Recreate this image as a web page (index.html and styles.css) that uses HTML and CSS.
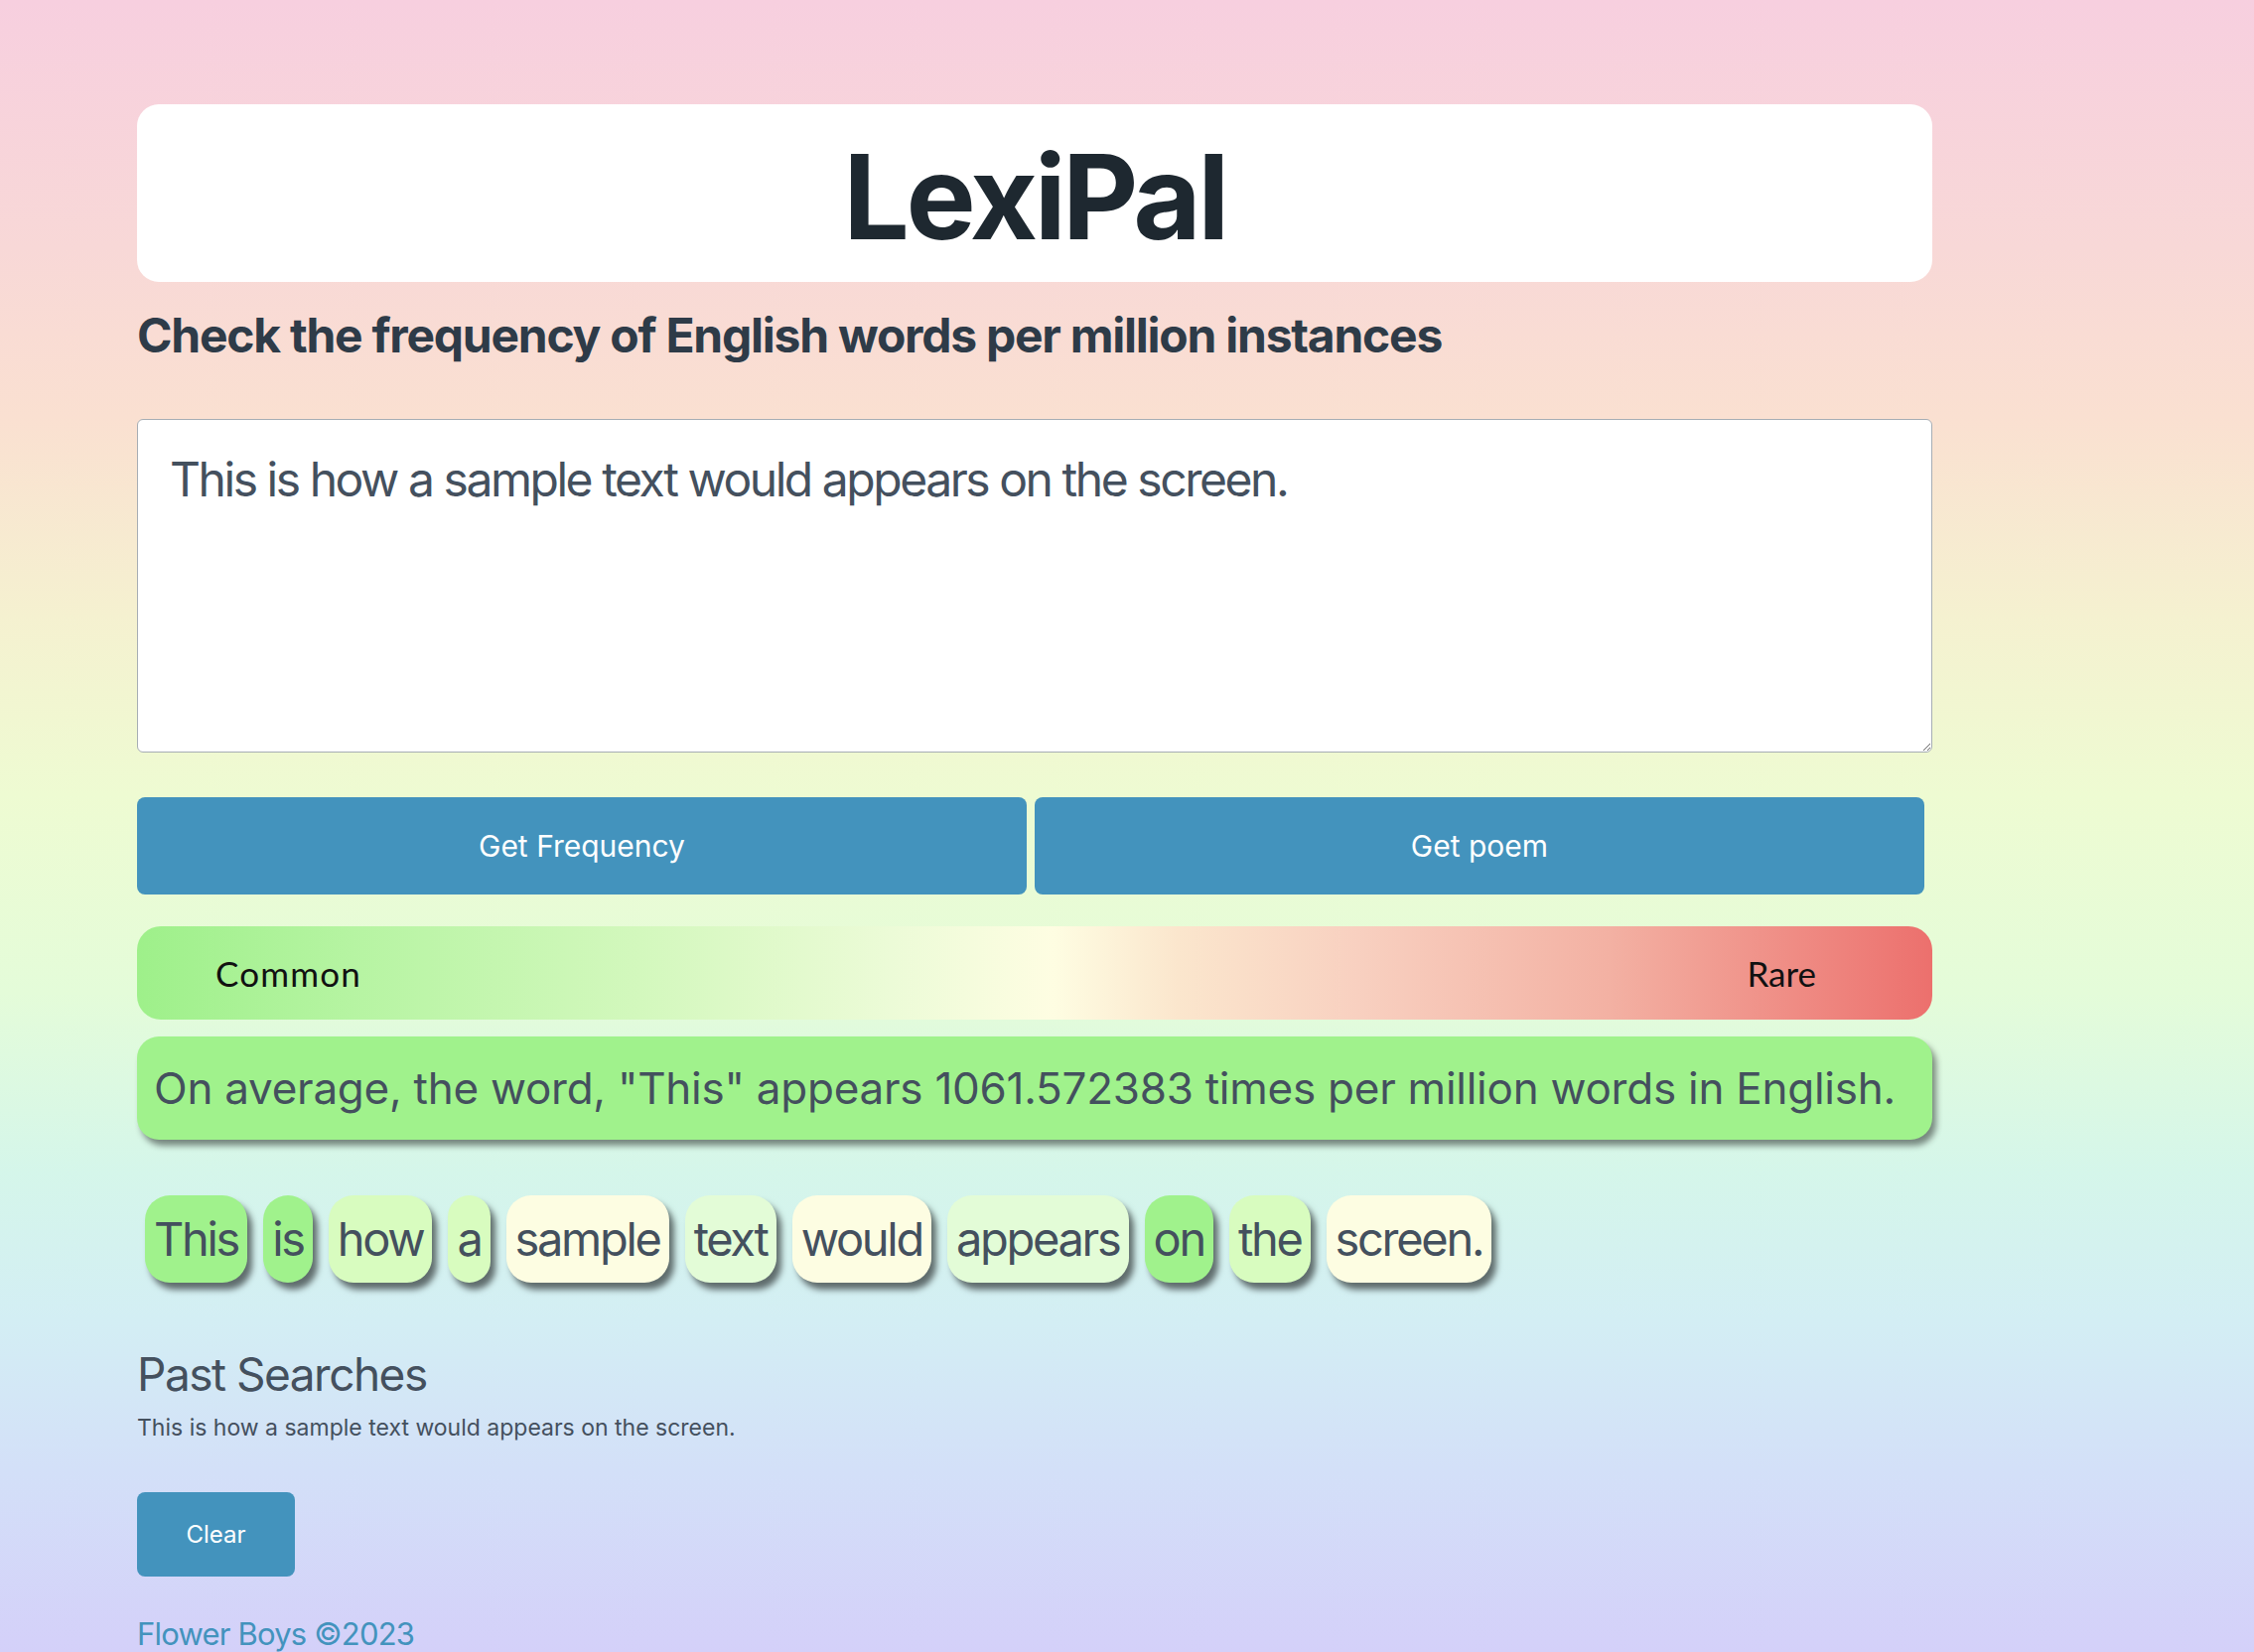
FILE: index.html
```html
<!DOCTYPE html>
<html lang="en">
<head>
<meta charset="utf-8">
<title>LexiPal</title>
<link rel="stylesheet" href="styles.css">
</head>
<body>
<div class="page">
  <header class="title-card">
    <h1 class="title">LexiPal</h1>
  </header>
  <h2 class="subtitle">Check the frequency of English words per million instances</h2>
  <textarea class="input">This is how a sample text would appears on the screen.</textarea>
  <div class="actions">
    <button class="btn btn-wide">Get Frequency</button>
    <button class="btn btn-wide">Get poem</button>
  </div>
  <div class="scale">
    <span class="scale-label scale-common">Common</span>
    <span class="scale-label scale-rare">Rare</span>
  </div>
  <div class="result">On average, the word, "This" appears 1061.572383 times per million words in English.</div>
  <div class="chips">
    <span class="chip c1">This</span>
    <span class="chip c1">is</span>
    <span class="chip c2">how</span>
    <span class="chip c2">a</span>
    <span class="chip c4">sample</span>
    <span class="chip c3">text</span>
    <span class="chip c4">would</span>
    <span class="chip c3">appears</span>
    <span class="chip c1">on</span>
    <span class="chip c2">the</span>
    <span class="chip c4">screen.</span>
  </div>
  <h3 class="past-title">Past Searches</h3>
  <p class="past-item">This is how a sample text would appears on the screen.</p>
  <button class="btn btn-clear">Clear</button>
  <footer class="footer">Flower Boys ©2023</footer>
</div>
</body>
</html>
```
FILE: styles.css
```css
html, body {
  margin: 0;
  padding: 0;
}
body {
  min-height: 1664px;
  font-family: Inter, "Noto Sans", sans-serif;
  color: #44505e;
  background: linear-gradient(180deg,
    #f7cfdf 0px,
    #f8d8d7 250px,
    #fae0d1 420px,
    #f5f1d0 620px,
    #eefbd2 800px,
    #e4fcd9 1000px,
    #d5f6ea 1180px,
    #d3eef4 1330px,
    #d3e0f8 1480px,
    #d4d0f9 1664px);
  overflow: hidden;
}
.page {
  width: 1808px;
  margin-left: 138px;
  padding-top: 105px;
  display: flex;
  flex-direction: column;
  align-items: flex-start;
}
.title-card {
  width: 100%;
  box-sizing: border-box;
  height: 179px;
  background: #ffffff;
  border-radius: 22px;
  padding-top: 34px;
  text-align: center;
}
.title {
  margin: 0;
  font-size: 118px;
  line-height: 1;
  font-weight: 700;
  color: #1e2830;
  letter-spacing: -3.6px;
}
.subtitle {
  margin: 25px 0 0 0;
  font-size: 48px;
  line-height: 1.2;
  font-weight: 700;
  color: #2e3b48;
  letter-spacing: -1.25px;
}
.input {
  margin-top: 55px;
  width: 100%;
  height: 336px;
  box-sizing: border-box;
  border: 1px solid #a6adb4;
  border-radius: 6px;
  background: #ffffff;
  padding: 30px 32px;
  font-family: Inter, "Noto Sans", sans-serif;
  font-size: 48px;
  letter-spacing: -2.45px;
  color: #44505e;
  resize: vertical;
  outline: none;
}
.actions {
  margin-top: 45px;
  width: 1800px;
  display: flex;
  gap: 8px;
}
.btn {
  border: none;
  background: #4393bd;
  color: #ffffff;
  font-family: Inter, "Noto Sans", sans-serif;
  border-radius: 8px;
  cursor: pointer;
}
.btn-wide {
  flex: 1;
  height: 98px;
  font-size: 30px;
}
.scale {
  margin-top: 32px;
  width: 100%;
  height: 94px;
  box-sizing: border-box;
  border-radius: 24px;
  padding: 0 117px 0 79px;
  display: flex;
  align-items: center;
  justify-content: space-between;
  background: linear-gradient(90deg,
    #9ef08a 0%,
    #b6f4a2 12%,
    #d3f8bd 28%,
    #ecfbd7 42%,
    #fefde2 51%,
    #fbe6cd 58%,
    #f8d0c0 68%,
    #f3b1a3 82%,
    #ec706d 100%);
}
.scale-label {
  font-family: Lato, "Noto Sans", sans-serif;
  font-size: 35px;
  color: #111111;
}
.scale-common {
  letter-spacing: 1.2px;
}
.result {
  margin-top: 17px;
  width: 100%;
  height: 104px;
  box-sizing: border-box;
  padding: 0 17px;
  display: flex;
  align-items: center;
  background: #a0f28c;
  border-radius: 22px;
  font-size: 44px;
  letter-spacing: -0.25px;
  color: #44505e;
  box-shadow: 4px 6px 6px rgba(0, 0, 0, 0.45);
  white-space: nowrap;
}
.chips {
  margin-top: 56px;
  display: flex;
  flex-wrap: wrap;
}
.chip {
  margin: 0 8px;
  height: 88px;
  box-sizing: border-box;
  padding: 0 9px;
  display: flex;
  align-items: center;
  border-radius: 25px;
  font-size: 47px;
  letter-spacing: -2.3px;
  color: #44505e;
  box-shadow: 5px 7px 6px rgba(0, 0, 0, 0.55);
}
.c1 { background: #a0f28c; }
.c2 { background: #d8fcbf; }
.c3 { background: #e3fcd7; }
.c4 { background: #fdfde2; }
.past-title {
  margin: 65px 0 0 0;
  font-size: 46px;
  line-height: 1.2;
  font-weight: 400;
  letter-spacing: -1.5px;
  color: #44505e;
}
.past-item {
  margin: 9px 0 0 0;
  font-size: 23px;
  line-height: 1.5;
  color: #44505e;
}
.btn-clear {
  margin-top: 48px;
  width: 159px;
  height: 85px;
  font-size: 24px;
}
.footer {
  margin-top: 39px;
  font-size: 31px;
  line-height: 1.2;
  letter-spacing: -0.8px;
  color: #4393bd;
}
```
